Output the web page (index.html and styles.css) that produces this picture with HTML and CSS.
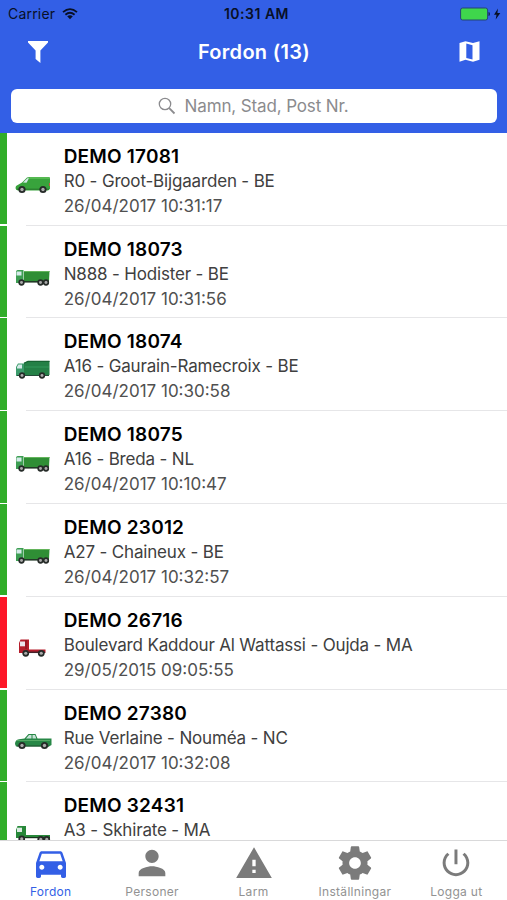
FILE: index.html
```html
<!DOCTYPE html>
<html lang="sv">
<head>
  <meta charset="UTF-8" />
  <meta name="viewport" content="width=device-width, initial-scale=1.0">
  <title>Fordon</title>
  <link rel="stylesheet" href="styles.css">
</head>
<body>

  <!-- Vehicle icons -->
  <svg class="sprite" aria-hidden="true">
    <symbol id="wheel" viewBox="0 0 8 8">
      <circle cx="4" cy="4" r="3.6" fill="#252b28" />
      <circle cx="4" cy="4" r="1.7" fill="#aaa" />
    </symbol>
    <symbol id="van" viewBox="0 0 36 18">
      <path d="M1 10 L7 6.5 L12 1.6 Q13 1 15 1 H34 Q35 1 35 3 V13 L33 14.5 H3 Q0.5 14 0.5 12 Z" fill="#38a33c" />
      <path d="M15 1 H34 L35 3 H13Z" fill="#55b951" />
      <path d="M8 6.5 L12.3 2.3 H14 L11.5 6.7Z" fill="#d5e8ea" />
      <path d="M2 13.2 H34" stroke="#28752c" />
      <path d="M34.5 7 V10" stroke="#c55d47" />
      <use href="#wheel" x="3" y="9.5" width="8" height="8" />
      <use href="#wheel" x="24" y="9.5" width="8" height="8" />
    </symbol>
    <symbol id="tipper" viewBox="0 0 36 18">
      <path d="M1 2 L2.5 1 H8.5 V14 H1Z" fill="#3d9e52" />
      <path d="M1.5 2.5 H6.5 V6.5 H1.5Z" fill="#d5eae8" />
      <path d="M9 2 H34.5 L34 12 H9Z" fill="#2f8e35" />
      <path d="M9 2.5 H34.5" stroke="#63b45b" />
      <path d="M8 12.8 H34" stroke="#223a27" stroke-width="1.6" />
      <use href="#wheel" x="3" y="10" width="7" height="7" />
      <use href="#wheel" x="22" y="10" width="7" height="7" />
      <use href="#wheel" x="27.5" y="10" width="7" height="7" />
    </symbol>
    <symbol id="box" viewBox="0 0 36 20">
      <path d="M1 7 L3 3.5 H9 V16 H1Z" fill="#3c9b6b" />
      <path d="M2 7 L3.4 4.4 H7 V8.5 H2Z" fill="#d5eae8" />
      <path d="M9 3 L13 1 H34.5 V15 H9Z" fill="#248046" />
      <path d="M9 3.2 L13 1.4 H34.5" stroke="#176332" stroke-width="1.2" fill="none" />
      <path d="M10 7 H34" stroke="#2b8c50" stroke-width="2" />
      <path d="M2 15.5 H34" stroke="#234c38" />
      <use href="#wheel" x="3.5" y="12" width="7" height="7" />
      <use href="#wheel" x="23.5" y="12" width="7" height="7" />
    </symbol>
    <symbol id="tractor" viewBox="0 0 36 20">
      <path d="M4 5 L5.5 1.5 H14 V11.5 H30.5 V15 H4Z" fill="#b51c2b" />
      <path d="M5 3.5 H10 V8.3 H5Z" fill="#ebe3ec" />
      <path d="M11 2 V11" stroke="#7d1223" />
      <path d="M14 14.3 H30" stroke="#442229" stroke-width="1.5" />
      <use href="#wheel" x="7" y="11.5" width="7.5" height="7.5" />
      <use href="#wheel" x="22.5" y="11.5" width="7.5" height="7.5" />
    </symbol>
    <symbol id="pickup" viewBox="0 0 38 18">
      <path d="M1 11 Q1 7 5 6.2 L10.5 5.5 L14.5 1 H21.5 L23.5 5.5 H37.5 V12 L35 13.5 H2Z" fill="#278746" />
      <path d="M12 5.5 L15 2 H17.5 V5.5Z M18.5 2 H21 L22.3 5.5 H18.5Z" fill="#c9e4d9" />
      <path d="M3 7.5 H36" stroke="#54aa65" />
      <path d="M3 13 H35" stroke="#214d2f" />
      <use href="#wheel" x="4" y="8.5" width="8" height="8" />
      <use href="#wheel" x="26.5" y="8.5" width="8" height="8" />
    </symbol>
    <symbol id="flatbed" viewBox="0 0 36 18">
      <path d="M1 5 L2.5 1 H11 V10 H35 V13 H1Z" fill="#278839" />
      <path d="M2 2.7 H7 V7 H2Z" fill="#dcebe3" />
      <path d="M10 12.6 H35" stroke="#18351e" stroke-width="1.2" />
      <use href="#wheel" x="3" y="10" width="7.5" height="7.5" />
      <use href="#wheel" x="22" y="10.5" width="7.5" height="7.5" />
      <use href="#wheel" x="28" y="10.5" width="7.5" height="7.5" />
    </symbol>
  </svg>

  <div class="app">
    <header class="header">
      <div class="status">
        <div class="status-left">
          <span class="carrier">Carrier</span>
          <svg class="wifi" viewBox="0 0 16 12">
            <path d="M1 4.2 Q8 -2 15 4.2 M3.4 6.7 Q8 2.7 12.6 6.7" fill="none" stroke="currentColor" stroke-width="1.8" />
            <path d="M5.2 8.3 Q8 6.2 10.8 8.3 L8 11.3Z" fill="currentColor" />
          </svg>
        </div>
        <span class="clock">10:31 AM</span>
        <div class="status-right">
          <svg class="battery" viewBox="0 0 42 14">
            <rect x="0.6" y="1" width="27" height="12" rx="2" fill="#3fd64c" stroke="#254575" />
            <path d="M28.5 5 Q30 5 30 7 Q30 9 28.5 9Z" fill="#14254f" />
            <path d="M38 1.5 L34 7.8 H36.5 L35.7 12.5 L40.3 6 H37.4Z" fill="#081027" />
          </svg>
        </div>
      </div>

      <div class="titlebar">
        <svg class="icon-filter" viewBox="0 0 22 24"><path d="M1 1 H21 V2.6 L13.4 10.6 V23 L8.6 19 V10.6 L1 2.6Z" fill="currentColor" /></svg>
        <h1>Fordon (13)</h1>
        <svg class="icon-map" viewBox="0 0 21 21"><path fill-rule="evenodd" d="M0.5 2 L6.5 0.3 L14 2 L20.5 0.3 V18.8 L14 20.7 L6.5 18.8 L0.5 20.7Z M7.3 2.6 V17 L13.5 18.6 V4.2Z" fill="currentColor" /></svg>
      </div>

      <div class="search">
        <svg class="icon-search" viewBox="0 0 18 18"><circle cx="7" cy="7" r="5.7" fill="none" stroke="currentColor" stroke-width="1.3" /><path d="M11.2 11.2 L16.5 16.5" stroke="currentColor" stroke-width="1.8" /></svg>
        <span>Namn, Stad, Post Nr.</span>
      </div>
    </header>

    <main class="list">
      <article class="row">
        <div class="vehicle"><svg class="v-van"><use href="#van" /></svg></div>
        <div class="info">
          <h2>DEMO 17081</h2>
          <p>R0 - Groot-Bijgaarden - BE</p>
          <p class="time">26/04/2017 10:31:17</p>
        </div>
      </article>
      <article class="row">
        <div class="vehicle"><svg class="v-van"><use href="#tipper" /></svg></div>
        <div class="info">
          <h2>DEMO 18073</h2>
          <p>N888 - Hodister - BE</p>
          <p class="time">26/04/2017 10:31:56</p>
        </div>
      </article>
      <article class="row">
        <div class="vehicle"><svg class="v-box"><use href="#box" /></svg></div>
        <div class="info">
          <h2>DEMO 18074</h2>
          <p>A16 - Gaurain-Ramecroix - BE</p>
          <p class="time">26/04/2017 10:30:58</p>
        </div>
      </article>
      <article class="row">
        <div class="vehicle"><svg class="v-van"><use href="#tipper" /></svg></div>
        <div class="info">
          <h2>DEMO 18075</h2>
          <p>A16 - Breda - NL</p>
          <p class="time">26/04/2017 10:10:47</p>
        </div>
      </article>
      <article class="row">
        <div class="vehicle"><svg class="v-van"><use href="#tipper" /></svg></div>
        <div class="info">
          <h2>DEMO 23012</h2>
          <p>A27 - Chaineux - BE</p>
          <p class="time">26/04/2017 10:32:57</p>
        </div>
      </article>
      <article class="row alert">
        <div class="vehicle"><svg class="v-box"><use href="#tractor" /></svg></div>
        <div class="info">
          <h2>DEMO 26716</h2>
          <p>Boulevard Kaddour Al Wattassi - Oujda - MA</p>
          <p class="time">29/05/2015 09:05:55</p>
        </div>
      </article>
      <article class="row">
        <div class="vehicle"><svg class="v-pickup"><use href="#pickup" /></svg></div>
        <div class="info">
          <h2>DEMO 27380</h2>
          <p>Rue Verlaine - Nouméa - NC</p>
          <p class="time">26/04/2017 10:32:08</p>
        </div>
      </article>
      <article class="row">
        <div class="vehicle"><svg class="v-flatbed"><use href="#flatbed" /></svg></div>
        <div class="info">
          <h2>DEMO 32431</h2>
          <p>A3 - Skhirate - MA</p>
        </div>
      </article>
    </main>

    <nav class="tabs">
      <a class="tab active">
        <svg viewBox="0 0 24 24"><path d="M18.92 6.01C18.72 5.42 18.16 5 17.5 5h-11c-.66 0-1.21.42-1.42 1.01L3 12v8c0 .55.45 1 1 1h1c.55 0 1-.45 1-1v-1h12v1c0 .55.45 1 1 1h1c.55 0 1-.45 1-1v-8l-2.08-5.99zM6.5 16c-.83 0-1.5-.67-1.5-1.5S5.67 13 6.5 13s1.5.67 1.5 1.5S7.33 16 6.5 16zm11 0c-.83 0-1.5-.67-1.5-1.5s.67-1.5 1.5-1.5 1.5.67 1.5 1.5-.67 1.5-1.5 1.5zM5 11l1.5-4.5h11L19 11H5z" /></svg>
        <span>Fordon</span>
      </a>
      <a class="tab">
        <svg viewBox="0 0 24 24"><path d="M12 12c2.21 0 4-1.79 4-4s-1.79-4-4-4-4 1.79-4 4 1.79 4 4 4zm0 2c-2.67 0-8 1.34-8 4v2h16v-2c0-2.66-5.33-4-8-4z" /></svg>
        <span>Personer</span>
      </a>
      <a class="tab">
        <svg viewBox="0 0 24 24"><path d="M1.3 21h21.4L12 2.5 1.3 21zm11.7-3h-2v-2h2v2zm0-4h-2v-4h2v4z" /></svg>
        <span>Larm</span>
      </a>
      <a class="tab">
        <svg viewBox="0 0 24 24"><path d="M19.43 12.98c.04-.32.07-.64.07-.98s-.03-.66-.07-.98l2.11-1.65c.19-.15.24-.42.12-.64l-2-3.46c-.12-.22-.39-.3-.61-.22l-2.49 1c-.52-.4-1.08-.73-1.69-.98l-.38-2.65C14.46 2.18 14.25 2 14 2h-4c-.25 0-.46.18-.49.42l-.38 2.65c-.61.25-1.17.59-1.69.98l-2.49-1c-.23-.09-.49 0-.61.22l-2 3.46c-.13.22-.07.49.12.64l2.11 1.65c-.04.32-.07.65-.07.98s.03.66.07.98l-2.11 1.65c-.19.15-.24.42-.12.64l2 3.46c.12.22.39.3.61.22l2.49-1c.52.4 1.08.73 1.69.98l.38 2.65c.03.24.24.42.49.42h4c.25 0 .46-.18.49-.42l.38-2.65c.61-.25 1.17-.59 1.69-.98l2.49 1c.23.09.49 0 .61-.22l2-3.46c.12-.22.07-.49-.12-.64l-2.11-1.65zM12 15.5c-1.93 0-3.5-1.57-3.5-3.5s1.57-3.5 3.5-3.5 3.5 1.57 3.5 3.5-1.57 3.5-3.5 3.5z" /></svg>
        <span>Inställningar</span>
      </a>
      <a class="tab">
        <svg viewBox="0 0 24 24"><path d="M13 3h-2v10h2V3zm4.83 2.17l-1.42 1.42C17.99 7.86 19 9.81 19 12c0 3.87-3.13 7-7 7s-7-3.13-7-7c0-2.19 1.01-4.14 2.58-5.42L6.17 5.17C4.23 6.82 3 9.26 3 12c0 4.97 4.03 9 9 9s9-4.03 9-9c0-2.74-1.23-5.18-3.17-6.83z" transform="translate(1.3 1.2) scale(.89)" /></svg>
        <span>Logga ut</span>
      </a>
    </nav>
  </div>

</body>
</html>
```
FILE: styles.css
```css
* {
  box-sizing: border-box;
}
body {
  margin: 0;
  font-family: Inter, "Liberation Sans", sans-serif;
  background: #fff;
  color: #000;
  overflow: hidden;
}
.sprite {
  display: block;
  width: 0;
  height: 0;
}
.app {
  height: 900px;
  display: flex;
  flex-direction: column;
}

/* Header */
.header {
  flex: 0 0 132.8px;
  background: #335fe6;
}
.status {
  height: 27px;
  padding: 0 5px 0 8px;
  display: grid;
  grid-template-columns: 1fr auto 1fr;
  align-items: center;
  font-size: 14px;
  color: #081027;
}
.status-left {
  display: flex;
  align-items: center;
  gap: 7px;
}
.carrier {
  letter-spacing: 0.2px;
}
.wifi {
  width: 16px;
  height: 12px;
}
.clock {
  padding-left: 3px;
  font-weight: 600;
  letter-spacing: 0.5px;
}
.status-right {
  display: flex;
  justify-content: flex-end;
}
.battery {
  width: 42px;
  height: 14px;
}
.titlebar {
  height: 62px;
  padding: 0 27px 12px 27px;
  display: flex;
  justify-content: space-between;
  align-items: center;
  color: #fff;
}
.titlebar h1 {
  margin: 0;
  font-size: 20px;
  font-weight: 600;
  letter-spacing: 0.3px;
}
.icon-filter {
  width: 22px;
  height: 24px;
  margin-bottom: 1px;
}
.icon-map {
  width: 21px;
  height: 21px;
  margin-bottom: 2px;
}
.search {
  height: 34px;
  margin: 0 10px 0 11px;
  padding-right: 2px;
  border-radius: 6px;
  background: #fff;
  display: flex;
  justify-content: center;
  align-items: center;
  gap: 9px;
  font-size: 17px;
  letter-spacing: -0.13px;
  color: #8b8b8e;
}
.icon-search {
  width: 18px;
  height: 18px;
}

/* Vehicle list */
.list {
  flex: 1;
  min-height: 0;
  overflow: hidden;
}
.row {
  height: 92.8px;
  display: flex;
  background:
    linear-gradient(#e6e6e8, #e6e6e8) 26px 100% / 100% 1px no-repeat,
    linear-gradient(#fff, #fff);
}
.row::before {
  content: "";
  width: 7px;
  height: 91.5px;
  background: #30ad29;
}
.row.alert::before {
  background: #fd1728;
}
.vehicle {
  width: 56.7px;
  padding: 43.5px 0 0 8px;
}
.vehicle svg {
  display: block;
}
.v-van {
  width: 36px;
  height: 18px;
}
.v-box {
  width: 36px;
  height: 20px;
  margin-top: -2px;
}
.v-pickup {
  width: 38px;
  height: 18px;
  margin-left: -1px;
}
.v-flatbed {
  width: 36px;
  height: 18px;
  margin-top: -1px;
}
.info {
  padding-top: 11px;
}
.info h2 {
  margin: 0;
  font-size: 19px;
  font-weight: 600;
  line-height: 25px;
  letter-spacing: 0.2px;
}
.info p {
  margin: 0;
  font-size: 17px;
  line-height: 25px;
  letter-spacing: -0.17px;
  color: #404040;
  white-space: nowrap;
}
.info .time {
  letter-spacing: 0;
  color: #505050;
}

/* Bottom tabs */
.tabs {
  flex: 0 0 60px;
  min-height: 0;
  display: flex;
  background: #fff;
  border-top: 1px solid #d9d9da;
}
.tab {
  flex: 1;
  padding-top: 2px;
  display: flex;
  flex-direction: column;
  align-items: center;
  font-size: 12px;
  line-height: 18px;
  letter-spacing: 0.3px;
  color: #929292;
}
.tab svg {
  flex: none;
  width: 40px;
  height: 40px;
  fill: #7b7b7b;
}
.tab.active {
  color: #335fe6;
}
.tab.active svg {
  fill: #335fe6;
}
```
